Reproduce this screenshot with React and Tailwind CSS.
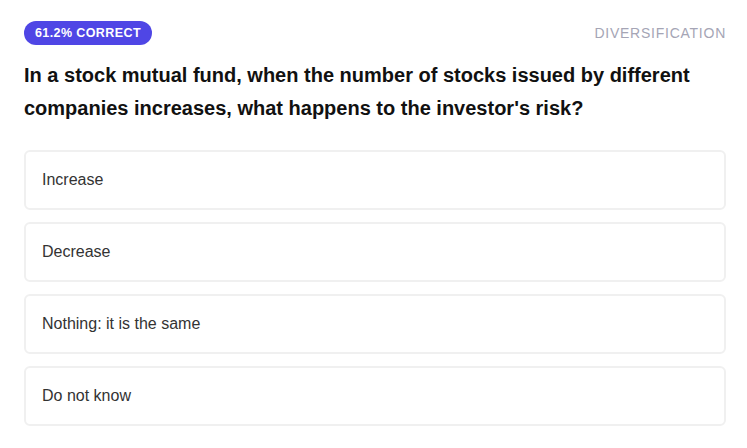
const options = ["Increase", "Decrease", "Nothing: it is the same", "Do not know"];

export default function App() {
  return (
    <div className="min-h-screen bg-white pl-6 pr-[21px] pt-[21px] font-['Liberation_Sans',Arial,sans-serif]">
      <div className="flex items-center justify-between">
        <span className="flex h-6 items-center rounded-full bg-[#4f46e5] px-[11px] text-[12.5px] font-bold tracking-[0.4px] text-white">
          61.2% CORRECT
        </span>
        <span className="text-[14px] tracking-[0.75px] text-[#a5a5b5]">DIVERSIFICATION</span>
      </div>
      <h1 className="mt-[14px] text-[20px] font-bold leading-[33px] text-[#111111]">
        In a stock mutual fund, when the number of stocks issued by different companies increases, what happens to the investor's risk?
      </h1>
      <div className="mt-[25px] flex flex-col gap-3">
        {options.map((opt) => (
          <div
            key={opt}
            className="flex h-[60px] items-center rounded-md border-2 border-[#f0f0f0] px-4 text-[16px] text-[#333333]"
          >
            {opt}
          </div>
        ))}
      </div>
    </div>
  );
}
